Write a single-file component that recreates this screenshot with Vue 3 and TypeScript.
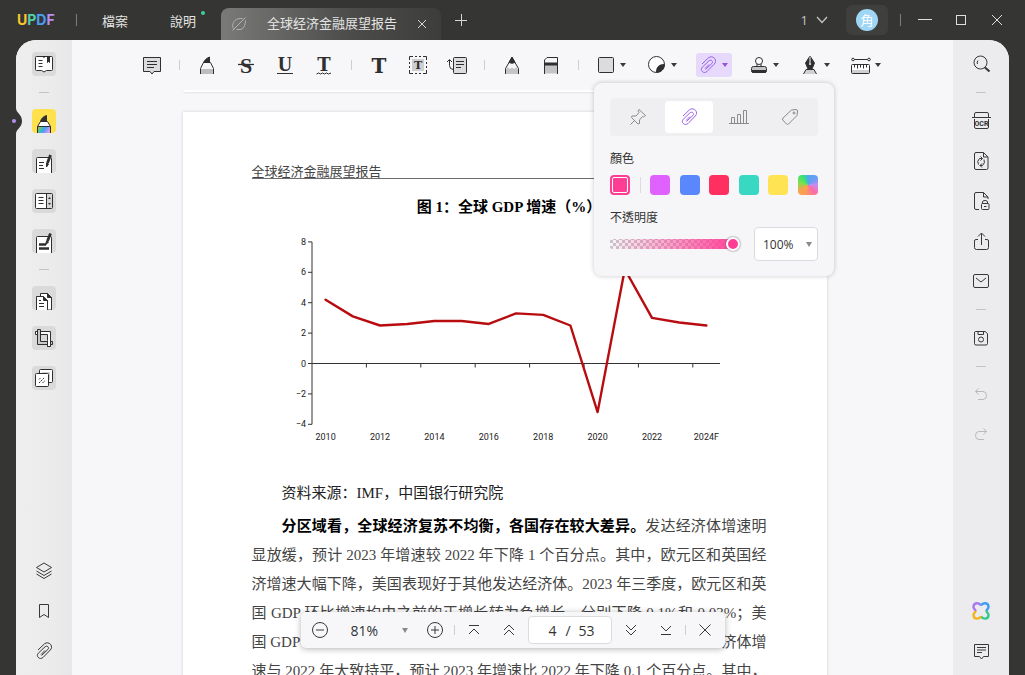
<script setup lang="ts">
import { ref } from 'vue'

interface Swatch {
  name: string
  color: string
}

const swatches: Swatch[] = [
  { name: '紫色', color: '#df62ff' },
  { name: '藍色', color: '#5a87fb' },
  { name: '紅色', color: '#ff2f60' },
  { name: '青色', color: '#38d8c2' },
  { name: '黃色', color: '#ffe352' },
]

const opacity = ref(100)
const page = ref('4')

const growth: number[] = [4.2, 3.1, 2.5, 2.6, 2.8, 2.8, 2.6, 3.3, 3.2, 2.5, -3.2, 6.2, 3.0, 2.7, 2.5]
const years: string[] = ['2010', '2012', '2014', '2016', '2018', '2020', '2022', '2024F']
const levels: number[] = [8, 6, 4, 2, 0, -2, -4]

const axisX = 60
const step = 27.2
const yOf = (v: number): number => 132.5 - v * 15.2
const linePoints: string = growth.map((v, i) => `${axisX + step * (i + 0.5)},${yOf(v)}`).join(' ')
const label = (v: number): string => (v < 0 ? `−${-v}` : `${v}`)
</script>

<template>
  <div class="app">
    <header class="titlebar">
      <div class="logo"><span class="u">U</span><span class="p">P</span><span class="d">D</span><span class="f">F</span></div>
      <i class="bar-sep"></i>
      <nav class="menu">
        <button type="button">檔案</button>
        <button type="button">說明<i class="dot"></i></button>
      </nav>
      <div class="tab">
        <svg width="16" height="16" viewBox="0 0 16 16" fill="none" stroke="#b4b4b2"><path d="M2.500 12.500C1 10.500 1.500 7 4 4.500C6 2.500 8.500 2.500 11.500 2.500M5.500 13.500H9C12 13.500 14.500 9.500 14.500 4.500M1.500 14.500L14.500 1.500" /></svg>
        <span class="tab-name">全球经济金融展望报告</span>
        <button type="button" class="close" aria-label="關閉分頁"><svg width="10" height="10" viewBox="0 0 10 10" stroke="#d6d6d4"><path d="M1 1L9 9M9 1L1 9" /></svg></button>
      </div>
      <button type="button" class="win plus" aria-label="新增分頁"><svg width="12" height="12" viewBox="0 0 12 12" stroke="#d6d6d4"><path d="M0 6.500H12M6.500 0V12" /></svg></button>
      <div class="right-tools">
        <button type="button" class="count">1<svg width="12" height="8" viewBox="0 0 12 8" fill="none" stroke="#c4c4c2" stroke-width="1.300"><path d="M1 1L6 6.500L11 1" /></svg></button>
        <button type="button" class="user"><span>角</span></button>
        <i class="bar-sep"></i>
        <button type="button" class="win" aria-label="最小化"><svg width="14" height="12" viewBox="0 0 14 12" stroke="#dededc"><path d="M0 5.500H14" /></svg></button>
        <button type="button" class="win" aria-label="最大化"><svg width="12" height="12" viewBox="0 0 12 12" fill="none" stroke="#dededc"><rect x="1.500" y="1.500" width="9" height="9" /></svg></button>
        <button type="button" class="win" aria-label="關閉"><svg width="12" height="12" viewBox="0 0 12 12" stroke="#dededc"><path d="M1 1L11 11M11 1L1 11" /></svg></button>
      </div>
    </header>

    <div class="body">
      <aside class="rail left">
        <svg class="notch" width="10" height="26" viewBox="0 0 10 26"><path d="M2 0C2 5 8 6 8 13S2 21 2 26H0V0z" fill="#353533" /><circle cx="0" cy="13" r="2" fill="#b78ef0" /></svg>
        <div class="stack">
          <button type="button" class="tool" aria-label="閱讀">
            <svg viewBox="0 0 24 24" class="ic"><path d="M4.500 4.500H19.500Q20.500 4.500 20.500 5.500V17.500Q20.500 18.500 19.500 18.500H14.500L12 20L9.500 18.500H4.500Q3.500 18.500 3.500 17.500V5.500Q3.500 4.500 4.500 4.500z" fill="#fff" /><path d="M6.500 8.500H10.500M6.500 11.500H10.500M6.500 14.500H10.500M11 4.500L12 5.500L13 4.500" /><path d="M15.500 4.500H17.500V10.500L16.500 9.500L15.500 10.500z" class="solid" /></svg>
          </button>
          <hr />
          <button type="button" class="tool active" aria-label="註釋">
            <svg viewBox="0 0 24 24" class="ic"><defs><linearGradient id="rainbow" x1="0" y1="0" x2="1" y2="0.300"><stop offset="0" stop-color="#f4a31c" /><stop offset="0.300" stop-color="#3fc9a0" /><stop offset="0.600" stop-color="#4d9cf5" /><stop offset="1" stop-color="#d49cf5" /></linearGradient></defs><path d="M5.500 18V24H18.500V18z" fill="url(#rainbow)" stroke="none" /><path d="M5.500 17.500L8.500 12.500H15.500L18.500 17.500z" fill="#fff" /><path d="M5.500 24V17.500M18.500 17.500V24" fill="none" /><path d="M8.500 12.500C9 10 11 7.500 14.500 6.500V12.500z" class="solid" /></svg>
          </button>
          <button type="button" class="tool" aria-label="編輯">
            <svg viewBox="0 0 24 24" class="ic"><path d="M4.500 24V9.500Q4.500 8.500 5.500 8.500H18.500Q19.500 8.500 19.500 9.500V24" fill="#fff" /><path d="M7 13.500H12M7 16.500H11M7 19.500H12" /><path d="M18.500 6L15.500 14" stroke-width="2.800" /><path d="M14.500 14L16.500 15L14.500 18z" class="solid" /></svg>
          </button>
          <button type="button" class="tool" aria-label="表單">
            <svg viewBox="0 0 24 24" class="ic"><rect x="3.500" y="4.500" width="17" height="15" rx="1" fill="#fff" /><path d="M14.500 5H20V19H14.500z" fill="#d6d6d6" stroke="none" /><path d="M14.500 4.500V19.500M6.500 8.500H11.500M6.500 11.500H11.500M6.500 14.500H11.500" /><path d="M17.500 8L19 10H16zM17.500 16L19 14H16z" class="solid thin" /></svg>
          </button>
          <button type="button" class="tool" aria-label="密文">
            <svg viewBox="0 0 24 24" class="ic"><path d="M4.500 24V8.500Q4.500 7.500 5.500 7.500H18.500Q19.500 7.500 19.500 8.500V24" fill="#fff" /><path d="M7 15.500H14M7 19.500H17" stroke-width="2.600" /><path d="M18.500 4.500L15.500 12" stroke-width="2.800" /><path d="M14.500 12L16.500 13L13.500 16z" class="solid" /></svg>
          </button>
          <hr />
          <button type="button" class="tool" aria-label="頁面">
            <svg viewBox="0 0 24 24" class="ic"><path d="M8.500 7.500H15.500L19.500 11.500V24H8.500z" fill="#fff" /><path d="M15.500 7.500L19.500 11.500H15.500z" class="solid" /><path d="M4.500 24V10.500H11.500L15.500 14.500V24" fill="#fff" /><path d="M11.500 10.500L15.500 14.500H11.500z" class="solid" /><path d="M7 14.500H9M7 17.500H12M7 20.500H12" /></svg>
          </button>
          <button type="button" class="tool" aria-label="裁剪">
            <svg viewBox="0 0 24 24" class="ic"><path d="M3.500 5.500H18.500V20.500H15.500V8.500H3.500z" fill="#fff" /><path d="M5.500 3.500H8.500V15.500H20.500V18.500H5.500z" fill="#c9c9c9" /><path d="M15.500 15V20.500H18.500V8" fill="#fff" /></svg>
          </button>
          <button type="button" class="tool" aria-label="浮水印">
            <svg viewBox="0 0 24 24" class="ic"><rect x="7.500" y="3.500" width="13" height="13" rx="1" fill="#fff" /><rect x="10" y="6" width="8" height="8" fill="#d0d0d0" stroke="none" /><rect x="3.500" y="7.500" width="13" height="13" rx="1" fill="#fff" /><path d="M7 13.500L9 11.500M7 17L12 12M10.500 17L13 14.500" stroke-dasharray="2 0.800" /></svg>
          </button>
        </div>
        <div class="stack bottom">
          <button type="button" class="tool plain" aria-label="圖層">
            <svg viewBox="0 0 24 24" class="ic line"><path d="M12 4L19.500 8.500L12 13L4.500 8.500zM4.500 12L12 16.500L19.500 12M4.500 15L12 19.500L19.500 15" /></svg>
          </button>
          <button type="button" class="tool plain" aria-label="書籤">
            <svg viewBox="0 0 24 24" class="ic line"><path d="M7.500 5.500H16.500V18.500L12 15.500L7.500 18.500z" /></svg>
          </button>
          <button type="button" class="tool plain" aria-label="附件">
            <svg viewBox="0 0 24 24" class="ic line"><path d="M6 11L12.500 4.800C14.500 3.200 17 3.600 18.600 5.400C20 7.200 19.800 9.500 18.300 11L11 18.500C9.500 19.800 7.500 19.800 6.300 18.500C5 17.300 5.100 15.400 6.300 14.200L13 7.800C14 7 15.200 7 16 7.800C16.800 8.700 16.600 9.700 15.900 10.500L9.500 16.500M9 15.500L13 11.500" /></svg>
          </button>
        </div>
      </aside>

      <main class="main">
        <div class="toolbar">
          <button type="button" class="tb" aria-label="註解">
            <svg viewBox="0 0 24 24" class="ic"><path d="M3.500 4.500H20.500V18.500H14L12 21L10 18.500H3.500z" fill="#dcdcdf" /><path d="M7 8.500H17M7 11.500H17M7 14.500H14" /></svg>
          </button>
          <i class="sep"></i>
          <button type="button" class="tb" aria-label="螢光標記">
            <svg viewBox="0 0 24 24" class="ic"><path d="M5 16H19V21H5z" fill="#bdbdbf" stroke="none" /><path d="M5.500 21V15.500L8.500 9.500H15.500L18.500 15.500V21" fill="none" /><path d="M8.500 9.500C9.500 7 12 5 14.500 4V9.500z" class="solid" /></svg>
          </button>
          <button type="button" class="tb" aria-label="刪除線">
            <svg viewBox="0 0 24 24" class="ic"><text x="12" y="20" class="glyph s">S</text><path d="M4 11.500H20" stroke-width="1.300" /></svg>
          </button>
          <button type="button" class="tb" aria-label="底線">
            <svg viewBox="0 0 24 24" class="ic"><text x="12" y="18" class="glyph un">U</text><path d="M4 20.500H20" /></svg>
          </button>
          <button type="button" class="tb" aria-label="波浪線">
            <svg viewBox="0 0 24 24" class="ic"><text x="12" y="18" class="glyph t">T</text><path d="M4.500 21L6.500 20L8.500 21L10.500 20L12.500 21L14.500 20L16.500 21L19 20" fill="none" /></svg>
          </button>
          <i class="sep"></i>
          <button type="button" class="tb" aria-label="文字">
            <svg viewBox="0 0 24 24" class="ic"><text x="12" y="20" class="glyph t big">T</text></svg>
          </button>
          <button type="button" class="tb" aria-label="文字方塊">
            <svg viewBox="0 0 24 24" class="ic"><rect x="6" y="6" width="12" height="12" fill="#cfcfd2" stroke="none" /><path d="M3.500 7V3.500H7M9 3.500H11M13 3.500H15M17 3.500H20.500V7M20.500 9V11M20.500 13V15M20.500 17V20.500H17M15 20.500H13M11 20.500H9M7 20.500H3.500V17M3.500 15V13M3.500 11V9" fill="none" /><text x="12" y="16" class="glyph t small">T</text></svg>
          </button>
          <button type="button" class="tb" aria-label="文字標註">
            <svg viewBox="0 0 24 24" class="ic"><rect x="8.500" y="4.500" width="13" height="16" rx="1" fill="#dcdcdf" /><path d="M11 8.500H19M11 11.500H19M11 14.500H16M8.500 16.500Q4.500 16.500 4.500 12.500V7M2 9L4.500 6.500L7 9" fill="none" /></svg>
          </button>
          <i class="sep"></i>
          <button type="button" class="tb" aria-label="鉛筆">
            <svg viewBox="0 0 24 24" class="ic"><path d="M5.500 16L8 14.500L10 16L12 14.500L14 16L16 14.500L18.500 16V21H5.500z" fill="#c4c4c6" stroke="none" /><path d="M5.500 21V15.500L12 4.500L18.500 15.500V21" fill="none" /><path d="M12 4L15 9.500Q12 11 9 9.500z" class="solid" /></svg>
          </button>
          <button type="button" class="tb" aria-label="橡皮擦">
            <svg viewBox="0 0 24 24" class="ic"><path d="M5.500 12H18.500V20.500H5.500z" fill="#c4c4c6" stroke="none" /><path d="M5.500 21V7L8 4.500H18.500V21" fill="none" /><path d="M5.500 11H18.500" stroke-width="3" /></svg>
          </button>
          <i class="sep"></i>
          <button type="button" class="tb drop" aria-label="形狀">
            <svg viewBox="0 0 24 24" class="ic"><rect x="4.500" y="4.500" width="15" height="15" rx="1" fill="#dcdcdf" /></svg><i class="caret"></i>
          </button>
          <button type="button" class="tb drop" aria-label="貼紙">
            <svg viewBox="0 0 24 24" class="ic"><path d="M11.500 19.500A8 8 0 1 1 19.500 11.500L11.500 19.500z" fill="#fff" stroke="none" /><path d="M11.500 19.500A8 8 0 1 1 19.500 11.500" fill="none" /><path d="M11.500 19.500C11.500 15 13 11.500 19.500 11.500C19.500 16 16 19.500 11.500 19.500z" class="solid" /></svg><i class="caret"></i>
          </button>
          <div class="anchor">
            <button type="button" class="tb drop on" aria-label="附件">
              <svg viewBox="0 0 24 24" class="ic violet"><path d="M6 11L12.500 4.800C14.500 3.200 17 3.600 18.600 5.400C20 7.200 19.800 9.500 18.300 11L11 18.500C9.500 19.800 7.500 19.800 6.300 18.500C5 17.300 5.100 15.400 6.300 14.200L13 7.800C14 7 15.200 7 16 7.800C16.800 8.700 16.600 9.700 15.900 10.500L9.500 16.500M9 15.500L13 11.500" /></svg><i class="caret"></i>
            </button>
            <section class="popup">
              <div class="kinds">
                <button type="button" aria-label="圖釘"><svg viewBox="0 0 24 24" class="ic grey"><path d="M13 4.500L19.500 10.500L17.500 12L16.500 11.500L13.500 15L13.500 18.500L12 19L5.500 12.500L6 11L10 11L13 7.500L12 6zM8.500 15.500L4.500 19.500" /></svg></button>
                <button type="button" class="sel" aria-label="迴紋針"><svg viewBox="0 0 24 24" class="ic violet"><path d="M6 11L12.500 4.800C14.500 3.200 17 3.600 18.600 5.400C20 7.200 19.800 9.500 18.300 11L11 18.500C9.500 19.800 7.500 19.800 6.300 18.500C5 17.300 5.100 15.400 6.300 14.200L13 7.800C14 7 15.200 7 16 7.800C16.800 8.700 16.600 9.700 15.900 10.500L9.500 16.500M9 15.500L13 11.500" /></svg></button>
                <button type="button" aria-label="圖表"><svg viewBox="0 0 24 24" class="ic grey"><path d="M2 18.500H22M4.500 18.500V12.500H7.500V18.500M10.500 18.500V9.500H13.500V18.500M16.500 18.500V5.500H19.500V18.500" /></svg></button>
                <button type="button" aria-label="標籤"><svg viewBox="0 0 24 24" class="ic grey"><path d="M13.500 5L18 4.500Q19.500 4.500 19.500 6L19 10.500L10.500 19Q9.500 20 8.500 19L4.800 15Q4 14 5 13z" /><circle cx="16" cy="8" r="1" /></svg></button>
              </div>
              <h3>顏色</h3>
              <div class="colors">
                <button type="button" class="swatch current" aria-label="目前顏色"></button>
                <i class="color-sep"></i>
                <button v-for="s in swatches" :key="s.name" type="button" class="swatch" :aria-label="s.name" :style="{ background: s.color }"></button>
                <button type="button" class="swatch any" aria-label="自訂顏色"></button>
              </div>
              <h3 class="tight"><label for="opacity">不透明度</label></h3>
              <div class="opacity">
                <input id="opacity" v-model="opacity" type="range" min="0" max="100" />
                <div class="pick">
                  <select aria-label="不透明度"><option>100%</option></select>
                  <i class="caret"></i>
                </div>
              </div>
            </section>
          </div>
          <button type="button" class="tb drop" aria-label="圖章">
            <svg viewBox="0 0 24 24" class="ic"><circle cx="12" cy="8" r="3.500" fill="#fff" /><path d="M10 11V13.500M14 11V13.500" /><rect x="4.500" y="13.500" width="15" height="6" rx="2" fill="#c4c4c6" /><path d="M5 17.500H19V18.500Q19 19.500 18 19.500H6Q5 19.500 5 18.500z" class="solid" /></svg><i class="caret"></i>
          </button>
          <button type="button" class="tb drop" aria-label="簽名">
            <svg viewBox="0 0 24 24" class="ic"><path d="M12 3L16.500 10L14 16H10L7.500 10z" class="solid" /><path d="M12 3.500V10" stroke="#f7f7f9" /><circle cx="12" cy="11" r="1" fill="#f7f7f9" stroke="none" /><path d="M5.500 21L8 16.500H16L18.500 21" fill="#d0d0d2" /></svg><i class="caret"></i>
          </button>
          <button type="button" class="tb drop" aria-label="測量">
            <svg viewBox="0 0 24 24" class="ic"><path d="M4 6.500H20" /><circle cx="4" cy="6.500" r="1.300" fill="#fff" /><circle cx="20" cy="6.500" r="1.300" fill="#fff" /><rect x="2.500" y="11.500" width="18" height="9" rx="1" fill="#fff" /><path d="M3 17H20V20H3z" fill="#d0d0d2" stroke="none" /><path d="M5.500 12V14.500M8.500 12V15.500M11.500 12V14.500M14.500 12V15.500M17.500 12V14.500" /></svg><i class="caret"></i>
          </button>
        </div>

        <div class="viewport">
          <div class="sheet previous"></div>
          <article class="sheet">
            <header class="running">全球经济金融展望报告</header>
            <h2>图 1：全球 GDP 增速（%）</h2>
            <svg class="chart" width="514" height="230" viewBox="0 0 514 230">
              <g stroke="#333" fill="none">
                <path :d="`M${axisX} ${yOf(8)}V${yOf(-4)}M${axisX} ${yOf(0)}H${axisX + step * 15}`" />
                <path v-for="v in levels" :key="v" :d="`M${axisX - 4} ${yOf(v)}H${axisX}`" />
                <path v-for="n in 7" :key="n" :d="`M${axisX + step * 2 * n} ${yOf(0)}v4`" />
              </g>
              <text v-for="v in levels" :key="v" class="ylab" :x="axisX - 6" :y="yOf(v) + 3">{{ label(v) }}</text>
              <text v-for="(y, i) in years" :key="y" class="xlab" :x="axisX + step * (2 * i + 0.5)" y="209">{{ y }}</text>
              <polyline :points="linePoints" fill="none" stroke="#b90c10" stroke-width="2.400" stroke-linejoin="round" stroke-linecap="round" />
            </svg>
            <p class="source">资料来源：IMF，中国银行研究院</p>
            <div class="text">
              <p class="first"><b>分区域看，全球经济复苏不均衡，各国存在较大差异。</b>发达经济体增速明</p>
              <p>显放缓，预计 2023 年增速较 2022 年下降 1 个百分点。其中，欧元区和英国经</p>
              <p>济增速大幅下降，美国表现好于其他发达经济体。2023 年三季度，欧元区和英</p>
              <p>国 GDP 环比增速均由之前的正增长转为负增长，分别下降 0.1%和 0.03%；美</p>
              <p class="split"><span>国 GDP</span><span>济体增</span></p>
              <p>速与 2022 年大致持平，预计 2023 年增速比 2022 年下降 0.1 个百分点。其中，</p>
            </div>
          </article>
        </div>

        <div class="pager">
          <button type="button" aria-label="縮小"><svg viewBox="0 0 24 24" class="ic line"><circle cx="12" cy="12" r="7.500" /><path d="M8 12H16" /></svg></button>
          <div class="zoom">
            <select aria-label="縮放"><option>81%</option></select>
            <i class="caret"></i>
          </div>
          <button type="button" aria-label="放大"><svg viewBox="0 0 24 24" class="ic line"><circle cx="12" cy="12" r="7.500" /><path d="M8 12H16M12 8V16" /></svg></button>
          <i class="sep"></i>
          <div class="pair">
            <button type="button" aria-label="第一頁"><svg viewBox="0 0 24 24" class="ic line"><path d="M7 7.500H17M7 16L12 11L17 16" /></svg></button>
            <button type="button" aria-label="上一頁"><svg viewBox="0 0 24 24" class="ic line"><path d="M7 12L12 7L17 12M7 17L12 12L17 17" /></svg></button>
          </div>
          <label class="page-box"><input v-model="page" type="text" aria-label="頁碼" /><span>/</span><span>53</span></label>
          <div class="pair">
            <button type="button" aria-label="下一頁"><svg viewBox="0 0 24 24" class="ic line"><path d="M7 7L12 12L17 7M7 12L12 17L17 12" /></svg></button>
            <button type="button" aria-label="最後一頁"><svg viewBox="0 0 24 24" class="ic line"><path d="M7 8L12 13L17 8M7 16.500H17" /></svg></button>
          </div>
          <i class="sep"></i>
          <button type="button" aria-label="關閉工具列"><svg viewBox="0 0 24 24" class="ic line"><path d="M6.500 6.500L17.500 17.500M17.500 6.500L6.500 17.500" /></svg></button>
        </div>
      </main>

      <aside class="rail right">
        <div class="stack">
          <button type="button" class="tool plain" aria-label="搜尋"><svg viewBox="0 0 24 24" class="ic line"><circle cx="11.500" cy="10.500" r="6.500" /><path d="M8.500 12Q7.500 10 9 8.500" /><path d="M16 15.500L20.500 19.500" stroke-width="2.200" /></svg></button>
          <hr />
          <button type="button" class="tool plain" aria-label="OCR"><svg viewBox="0 0 24 24" class="ic line"><path d="M5.500 8V5Q5.500 3.500 7 3.500H18Q19.500 3.500 19.500 5V8M3 8.500H22M5.500 10V18Q5.500 19.500 7 19.500H18Q19.500 19.500 19.500 18V10" /><text x="12.500" y="17" class="ocr">OCR</text></svg></button>
          <button type="button" class="tool plain" aria-label="轉換"><svg viewBox="0 0 24 24" class="ic line"><path d="M14.500 3.500H7Q5.500 3.500 5.500 5V19Q5.500 20.500 7 20.500H17.500Q19 20.500 19 19V8zM14.500 3.500V8H19M9.500 15.500Q7.500 12 10.500 9.500H13M11.500 7.500L13.500 9.500L11.500 11.500M15 10.500Q16.500 14 13.500 16.500H11M13 14.500L11 16.500L13 18.500" /></svg></button>
          <button type="button" class="tool plain" aria-label="保護"><svg viewBox="0 0 24 24" class="ic line"><path d="M10 20.500H7Q5.500 20.500 5.500 19V5Q5.500 3.500 7 3.500H14.500L19 8V10M14.500 3.500V8H19M13.500 14.500V13Q13.500 11.500 16 11.500T18.500 13V14.500" /><rect x="12.500" y="14.500" width="7.500" height="6" rx="1" /><path d="M15 17.500H17.500" /></svg></button>
          <button type="button" class="tool plain" aria-label="分享"><svg viewBox="0 0 24 24" class="ic line"><path d="M9 10.500H7Q5.500 10.500 5.500 12V18.500Q5.500 20.500 7.500 20.500H17.500Q19.500 20.500 19.500 18.500V12Q19.500 10.500 18 10.500H16M12.500 16V4.500M9 7.500L12.500 4L16 7.500" /></svg></button>
          <button type="button" class="tool plain" aria-label="郵件"><svg viewBox="0 0 24 24" class="ic line"><rect x="4.500" y="5.500" width="15" height="13" rx="1.500" /><path d="M7 9L12 13L17 9" /></svg></button>
          <hr />
          <button type="button" class="tool plain" aria-label="儲存"><svg viewBox="0 0 24 24" class="ic line"><path d="M6.500 5.500H16L18.500 7.500V17.500Q18.500 19 17 19H7Q5.500 19 5.500 17.500V7Q5.500 5.500 6.500 5.500zM9 5.500V8.500H14.500V5.500" /><circle cx="12" cy="13.500" r="2.500" /></svg></button>
          <hr />
          <button type="button" class="tool plain" aria-label="復原"><svg viewBox="0 0 24 24" class="ic faint"><path d="M9.500 5.500L6.500 8.500L9.500 11.500M6.500 8.500H14Q17.500 8.500 17.500 12.500T14 16.500H9" /></svg></button>
          <button type="button" class="tool plain" aria-label="重做"><svg viewBox="0 0 24 24" class="ic faint"><path d="M14.500 5.500L17.500 8.500L14.500 11.500M17.500 8.500H10Q6.500 8.500 6.500 12.500T10 16.500H15" /></svg></button>
        </div>
        <div class="stack bottom">
          <button type="button" class="tool plain" aria-label="AI 助理">
            <svg viewBox="0 0 24 24" fill="none" stroke-width="2.400"><path d="M12 6.500C10 3 4.500 3.500 4.500 8C4.500 10 6.500 10.500 6.500 12" stroke="#a879f0" /><path d="M12 6.500C14 3 19.500 3.500 19.500 8C19.500 10 17.500 10.500 17.500 12" stroke="#3d9df2" /><path d="M17.500 12C17.500 13.500 20 14 19.500 16.500C19 20.500 14 20.500 12 17.500" stroke="#36c98f" /><path d="M12 17.500C10 20.500 5 20.500 4.500 16.500C4 14 6.500 13.500 6.500 12" stroke="#f2b51d" /></svg>
          </button>
          <button type="button" class="tool plain" aria-label="註解列表"><svg viewBox="0 0 24 24" class="ic line"><path d="M5.500 5.500H19.500V17.500H14.500L12.500 20L10.500 17.500H5.500zM8 8.500H17M8 11H17M8 13.500H13" /></svg></button>
        </div>
      </aside>
    </div>
  </div>
</template>

<style>
html,
body {
  background: #353533;
}
</style>

<style scoped>
.app {
  height: 100vh;
  display: flex;
  flex-direction: column;
  overflow: hidden;
  background: #353533;
  font-family: 'Open Sans', 'Noto Sans CJK TC', sans-serif;
  color: #333;
}
button {
  display: flex;
  align-items: center;
  justify-content: center;
  padding: 0;
  border: 0;
  background: none;
  font: inherit;
  color: inherit;
}
select,
input {
  font: inherit;
  color: inherit;
}

/* title bar */
.titlebar {
  height: 40px;
  flex: none;
  display: flex;
  align-items: center;
  padding: 0 16px 0 17px;
  color: #e4e4e2;
  font-size: 13px;
}
.logo {
  width: 59px;
  font: 700 14px/40px Inter, sans-serif;
}
.u { color: #fbc72b; }
.p { color: #4fd3a8; }
.d { color: #4c9ff0; }
.f { color: #b98df2; }
.bar-sep {
  width: 1px;
  height: 12px;
  background: #7d7d7b;
}
.menu {
  display: flex;
  gap: 42px;
  margin: 0 25px;
}
.menu button {
  position: relative;
}
.dot {
  position: absolute;
  top: 0;
  right: -9px;
  width: 4px;
  height: 4px;
  border-radius: 2px;
  background: #3fcf9a;
}
.tab {
  width: 220px;
  height: 32px;
  align-self: flex-end;
  display: flex;
  align-items: center;
  box-sizing: border-box;
  padding: 0 14px 0 10px;
  border-radius: 8px 8px 0 0;
  background: linear-gradient(90deg, #7a7a78, #4b4b49 60%, #3d3d3b);
}
.tab-name {
  flex: 1;
  text-align: center;
  font-family: 'Open Sans', 'Noto Sans CJK SC', sans-serif;
  line-height: 30px;
  padding-bottom: 2px;
}
.tab .close {
  width: 10px;
}
.plus {
  margin-left: 14px;
}
.win {
  width: 12px;
  height: 24px;
}
.right-tools {
  margin-left: auto;
  display: flex;
  align-items: center;
  gap: 12px;
}
.right-tools .win {
  width: 24px;
}
.count {
  gap: 8px;
  margin-right: 6px;
  color: #c4c4c2;
  font-size: 13px;
}
.user {
  width: 42px;
  height: 30px;
  border-radius: 6px;
  background: #3f3f3d;
}
.user span {
  width: 22px;
  height: 22px;
  border-radius: 11px;
  background: #9fd6f5;
  color: #fff;
  font-size: 13px;
  line-height: 22px;
}

/* work area */
.body {
  flex: 1;
  min-height: 0;
  display: flex;
  margin: 0 16px;
  border-radius: 20px 20px 0 0;
  background: #f7f7f9;
}
.rail {
  position: relative;
  width: 56px;
  flex: none;
  display: flex;
  flex-direction: column;
  justify-content: space-between;
  box-sizing: border-box;
  padding: 12px 0;
}
.left {
  border-radius: 20px 0 0 0;
  background: linear-gradient(90deg, #eeeeee, #ebebec 70%, #e7e7ea);
}
.right {
  border-radius: 0 20px 0 0;
  background: #ecebed;
}
.notch {
  position: absolute;
  left: -2px;
  top: 68px;
  overflow: visible;
}
.stack {
  display: flex;
  flex-direction: column;
  align-items: center;
  gap: 16px;
}
hr {
  width: 10px;
  height: 1px;
  margin: 0;
  border: 0;
  background: #c4c4c4;
}
.tool {
  width: 24px;
  height: 24px;
  border-radius: 4px;
  background: #dadada;
}
.tool svg {
  width: 24px;
  height: 24px;
}
.active {
  background: #ffe14d;
}
.plain {
  background: none;
}
.ic {
  width: 24px;
  height: 24px;
  flex: none;
  stroke: #2f2f2f;
}
.line {
  fill: none;
  stroke: #383838;
}
.faint {
  fill: none;
  stroke: #b9b9bb;
}
.grey {
  fill: none;
  stroke: #8a8a8c;
}
.violet {
  fill: none;
  stroke: #9a60ea;
}
.solid {
  fill: #2f2f2f;
}
.thin {
  stroke: none;
}
.glyph {
  fill: #2f2f2f;
  stroke: none;
  text-anchor: middle;
  font-weight: 700;
  font-family: 'Liberation Serif', serif;
}
.s { font-size: 22px; }
.un { font-size: 20px; }
.t {
  font-size: 18px;
  font-family: 'DejaVu Serif', serif;
}
.big { font-size: 20px; }
.small { font-size: 11px; }
.ocr {
  fill: #2f2f2f;
  stroke: none;
  text-anchor: middle;
  font: 700 7px Roboto, sans-serif;
}

/* annotation toolbar */
.main {
  position: relative;
  flex: 1;
  min-width: 0;
  display: flex;
  flex-direction: column;
}
.toolbar {
  position: relative;
  z-index: 2;
  height: 50px;
  flex: none;
  display: flex;
  align-items: center;
  justify-content: center;
  gap: 15px;
}
.sep {
  width: 1px;
  height: 10px;
  background: #cfcfd2;
}
.tb {
  width: 24px;
  height: 24px;
}
.drop {
  width: 36px;
  justify-content: flex-start;
  border-radius: 3px;
}
.caret {
  border: 3px solid transparent;
  border-top: 4px solid #3a3a3a;
  border-bottom: 0;
}
.drop .caret {
  margin-left: 2px;
}
.on {
  background: #e6d9fb;
}
.on .caret {
  border-top-color: #9a4fe0;
}
.anchor {
  position: relative;
}

/* attachment options */
.popup {
  position: absolute;
  top: 30px;
  left: 50%;
  width: 240px;
  margin-left: -120px;
  box-sizing: border-box;
  padding: 15px 16px;
  border-radius: 8px;
  background: #f6f6f8;
  box-shadow: 0 0 5px rgba(0, 0, 0, 0.22);
}
.kinds {
  height: 38px;
  display: flex;
  align-items: center;
  justify-content: space-between;
  box-sizing: border-box;
  padding: 3px 4px;
  border-radius: 4px;
  background: #efeff1;
}
.kinds button {
  width: 48px;
  height: 32px;
  border-radius: 4px;
}
.kinds .sel {
  background: #fff;
}
h3 {
  margin: 15px 0 8px;
  font-size: 12px;
  line-height: 16px;
  font-weight: 400;
}
.tight {
  margin-bottom: 1px;
}
.colors {
  display: flex;
  align-items: center;
  justify-content: space-between;
}
.swatch {
  width: 20px;
  height: 20px;
  border-radius: 4px;
}
.current {
  border: 2px solid #ff3d95;
  outline: 1px solid #fff;
  outline-offset: -3px;
  background: #ff3d95;
}
.any {
  background: conic-gradient(#4fa8f2, #6f9cf2 15%, #c98cf0 25%, #ff6aa8 38%, #ff9d55 55%, #f9a24f 65%, #7be04b 80%, #35e07a 92%, #4fa8f2);
}
.color-sep {
  width: 1px;
  height: 16px;
  background: #dcdcdf;
}
.opacity {
  display: flex;
  align-items: center;
  justify-content: space-between;
}
.opacity input {
  appearance: none;
  width: 130px;
  height: 14px;
  box-sizing: border-box;
  margin: 0;
  padding: 2px 6px 2px 0;
  border-radius: 4px;
  background:
    linear-gradient(90deg, rgba(255, 61, 149, 0), #ff3d95),
    repeating-conic-gradient(#cbc4c9 0 25%, #f6f6f8 0 50%) 0 0 / 6px 6px;
  background-clip: content-box;
}
.opacity input::-webkit-slider-runnable-track {
  margin-right: -6px;
}
.opacity input::-webkit-slider-thumb {
  appearance: none;
  width: 14px;
  height: 14px;
  margin-top: -2px;
  box-sizing: border-box;
  border: 2px solid #fff;
  border-radius: 7px;
  background: #ff3d95;
  box-shadow: 0 0 2px #555;
}
.opacity input::-webkit-slider-runnable-track {
  height: 10px;
}
.pick {
  position: relative;
  width: 64px;
  height: 34px;
  box-sizing: border-box;
  border: 1px solid #dcdcdf;
  border-radius: 4px;
  background: #fff;
  font-size: 12px;
}
.pick select,
.zoom select {
  appearance: none;
  width: 100%;
  height: 100%;
  padding: 0 8px;
  border: 0;
  background: none;
}
.pick .caret,
.zoom .caret {
  position: absolute;
  right: 5px;
  top: 50%;
  margin-top: -2px;
  border-top: 5px solid #8a8a8c;
  pointer-events: none;
}

/* document */
.viewport {
  flex: 1;
  min-height: 0;
  display: flex;
  flex-direction: column;
  align-items: center;
  gap: 20px;
  padding-right: 16px;
  overflow: hidden;
}
.sheet {
  width: 644px;
  flex: none;
  box-sizing: border-box;
  padding: 54px 60px 0 69px;
  background: #fff;
  box-shadow: 0 0 3px rgba(0, 0, 0, 0.16);
  font-family: 'Liberation Serif', 'Noto Sans CJK SC', serif;
  font-size: 15px;
  color: #111;
}
.previous {
  height: 2px;
  padding: 0;
}
.running {
  border-bottom: 1px solid #6c6c6e;
  font-size: 13px;
  line-height: 12px;
  color: #444;
}
h2 {
  margin: 17px 0 0;
  text-align: center;
  font-size: 15px;
  line-height: 22px;
  color: #000;
}
.chart {
  display: block;
  margin-top: 13px;
}
.ylab,
.xlab {
  font: 9px Roboto, sans-serif;
  fill: #222;
}
.ylab {
  text-anchor: end;
}
.xlab {
  text-anchor: middle;
}
p {
  margin: 0;
  line-height: 29px;
  white-space: nowrap;
  text-align-last: justify;
  color: #444;
}
.source {
  margin: 18px 0 4px;
  padding-left: 30px;
  text-align-last: left;
  color: #222;
}
.first {
  padding-left: 30px;
}
b {
  color: #000;
}
.split {
  display: flex;
  justify-content: space-between;
}

/* page navigation */
.pager {
  position: absolute;
  left: 0;
  right: 0;
  bottom: 27px;
  width: fit-content;
  height: 36px;
  margin: 0 auto;
  display: flex;
  align-items: center;
  gap: 7px;
  box-sizing: border-box;
  padding: 0 8px 0 7px;
  border-radius: 5px;
  background: #f7f7f9;
  box-shadow: 0 1px 6px rgba(0, 0, 0, 0.3);
  font-size: 14px;
}
.zoom {
  position: relative;
  width: 77px;
  height: 28px;
}
.zoom select {
  padding: 0 12px;
}
.zoom .caret {
  right: 8px;
}
.pair {
  display: flex;
  gap: 11px;
}
.page-box {
  width: 84px;
  height: 28px;
  display: flex;
  align-items: center;
  justify-content: center;
  gap: 8px;
  box-sizing: border-box;
  padding-left: 4px;
  border: 1px solid #dcdcdf;
  border-radius: 4px;
  background: #fff;
}
.page-box input {
  width: 9px;
  padding: 0;
  border: 0;
  background: none;
}
</style>
